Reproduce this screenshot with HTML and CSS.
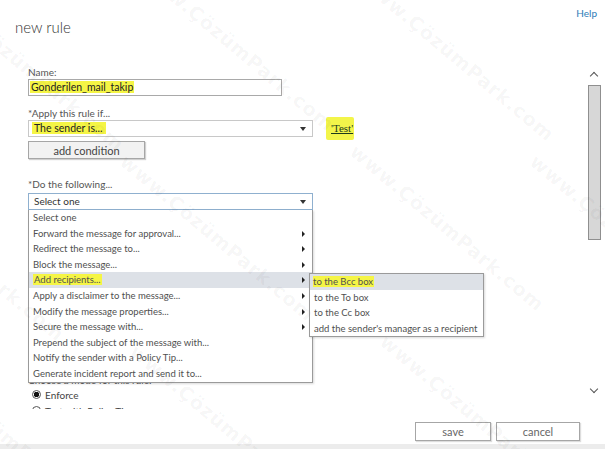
FILE: index.html
```html
<!DOCTYPE html>
<html lang="en">
<head>
    <meta charset="UTF-8">
    <title>new rule</title>
    <link rel="stylesheet" href="styles.css">
</head>
<body>
    <div class="page">
        <div class="top">
            <h1 class="title">new rule</h1>
            <a class="help" href="#">Help</a>
        </div>

        <div class="main">
            <div class="form">
                <label class="label first">Name:</label>
                <div class="input name-input"><span class="mark">Gonderilen_mail_takip</span></div>

                <label class="label">*Apply this rule if...</label>
                <div class="row">
                    <div class="select"><span class="mark">The sender is...</span><span class="caret"></span></div>
                    <span class="test-link"><a href="#">'Test'</a></span>
                </div>
                <button class="btn add-btn" type="button">add condition</button>

                <label class="label gap">*Do the following...</label>
                <div class="select open"><span>Select one</span><span class="caret"></span></div>

                <div class="below">
                    <div class="mode-label">Choose a mode for this rule:</div>
                    <div class="radio"><span class="dot checked"></span>Enforce</div>
                    <div class="radio next"><span class="dot"></span>Test with Policy Tips</div>
                </div>

                <!-- open dropdown of actions -->
                <ul class="menu">
                    <li>Select one</li>
                    <li class="sub">Forward the message for approval...</li>
                    <li class="sub">Redirect the message to...</li>
                    <li class="sub">Block the message...</li>
                    <li class="sub hover"><span class="mark">Add recipients...</span></li>
                    <li class="sub">Apply a disclaimer to the message...</li>
                    <li class="sub">Modify the message properties...</li>
                    <li class="sub">Secure the message with...</li>
                    <li>Prepend the subject of the message with...</li>
                    <li>Notify the sender with a Policy Tip...</li>
                    <li>Generate incident report and send it to...</li>
                </ul>

                <ul class="menu submenu">
                    <li class="hover"><span class="mark">to the Bcc box</span></li>
                    <li>to the To box</li>
                    <li>to the Cc box</li>
                    <li>add the sender's manager as a recipient</li>
                </ul>
            </div>

            <div class="scrollbar">
                <span class="arrow up"></span>
                <div class="thumb"></div>
                <span class="arrow down"></span>
            </div>
        </div>

        <div class="footer">
            <button class="btn save" type="button">save</button>
            <button class="btn cancel" type="button">cancel</button>
        </div>
        <div class="strip"></div>

        <div class="watermark">
            <span style="left:-60px;top:-20px">www.ÇözümPark.com</span>
            <span style="left:150px;top:-40px">www.ÇözümPark.com</span>
            <span style="left:370px;top:-30px">www.ÇözümPark.com</span>
            <span style="left:-120px;top:170px">www.ÇözümPark.com</span>
            <span style="left:130px;top:150px">www.ÇözümPark.com</span>
            <span style="left:360px;top:140px">www.ÇözümPark.com</span>
            <span style="left:540px;top:150px">www.ÇözümPark.com</span>
            <span style="left:-80px;top:350px">www.ÇözümPark.com</span>
            <span style="left:140px;top:340px">www.ÇözümPark.com</span>
            <span style="left:390px;top:330px">www.ÇözümPark.com</span>
        </div>
    </div>
</body>
</html>
```

FILE: styles.css
```css
body {
    margin: 0;
    background-color: #fff;
    color: #444;
    font-family: Lato, "Noto Sans", sans-serif;
    font-size: 10.5px;
}

.page {
    position: relative;
    width: 605px;
    height: 449px;
    overflow: hidden;
}

.top {
    display: flex;
    justify-content: space-between;
    align-items: flex-start;
    padding: 7px 8px 0 15px;
    height: 44px;
}

.title {
    margin: 11px 0 0 0;
    font-size: 15px;
    font-weight: 300;
    color: #333;
}

.help {
    font-size: 10px;
    color: #2d7db8;
    text-decoration: none;
}

.main {
    display: flex;
    justify-content: space-between;
    height: 358px;
    overflow: hidden;
}

.form {
    position: relative;
    padding-left: 28px;
    width: 400px;
}

.label {
    display: block;
    height: 14px;
    line-height: 14px;
    margin-top: 10px;
    font-size: 10px;
    color: #555;
}

.label.first {
    margin-top: 14px;
}

.label.gap {
    margin-top: 18px;
    margin-bottom: 2px;
}

.input,
.select {
    box-sizing: border-box;
    height: 17px;
    line-height: 15px;
    border: 1px solid #a9a9a9;
    padding-left: 1px;
    color: #222;
}

.name-input {
    width: 254px;
}

.mark {
    background-color: #f5f545;
    padding: 0 1px;
}

.row {
    display: flex;
    align-items: center;
    height: 17px;
}

.select {
    position: relative;
    width: 285px;
    border-color: #c8c8c8;
    padding-left: 3px;
}

.select .mark {
    padding: 0 4px 0 2px;
}

.select.open {
    border-color: #8fb0cf;
    padding-left: 5px;
    font-size: 10px;
    color: #333;
}

.caret {
    position: absolute;
    right: 6px;
    top: 6px;
    border-left: 3px solid transparent;
    border-right: 3px solid transparent;
    border-top: 4px solid #333;
}

.test-link {
    margin-left: 13px;
    padding: 5px 1px 6px 5px;
    background-color: #f3f54a;
    border-radius: 2px;
    font-family: "Liberation Serif", serif;
    font-size: 11px;
}

.test-link a {
    color: #1c3a1c;
}

.btn {
    box-sizing: border-box;
    background-color: #f2f2f2;
    border: 1px solid #a6a6a6;
    font-family: inherit;
    font-size: 11px;
    color: #444;
    padding: 0;
}

.add-btn {
    display: block;
    margin-top: 4px;
    width: 117px;
    height: 18px;
    box-shadow: 1px 1px 1px #d0d0d0;
}

.below {
    margin-top: 163px;
    font-size: 10px;
}

.mode-label {
    height: 14px;
    line-height: 14px;
    color: #555;
}

.radio {
    display: flex;
    align-items: center;
    height: 13px;
    margin-top: 1px;
    padding-left: 4px;
    color: #444;
}

.radio.next {
    margin-top: 3px;
}

.dot {
    box-sizing: border-box;
    width: 9px;
    height: 9px;
    margin-right: 4px;
    border: 1px solid #555;
    border-radius: 50%;
    background-color: #fff;
}

.dot.checked {
    background: radial-gradient(circle, #111 0 2.5px, #fff 3px);
}

.menu {
    position: absolute;
    left: 28px;
    top: 159px;
    box-sizing: border-box;
    width: 285px;
    margin: 0;
    padding: 0;
    list-style: none;
    background-color: #fff;
    border: 1px solid #9a9a9a;
    border-top: none;
    box-shadow: 1px 1px 2px rgba(0, 0, 0, 0.15);
    font-size: 9.5px;
}

.menu li {
    position: relative;
    height: 15.6px;
    line-height: 15.6px;
    padding-left: 4px;
    color: #505050;
    white-space: nowrap;
}

.menu li.hover {
    background-color: #dde1e7;
}

.menu li.sub::after {
    content: "";
    position: absolute;
    right: 7px;
    top: 5px;
    border-top: 3px solid transparent;
    border-bottom: 3px solid transparent;
    border-left: 3px solid #222;
}

.submenu {
    left: 309px;
    top: 222px;
    width: 175px;
    border-top: 1px solid #9a9a9a;
}

.submenu li {
    height: 15.5px;
    line-height: 15.5px;
}

.submenu .mark {
    padding: 0 1px 0 0;
    margin-left: -1px;
}

.scrollbar {
    display: flex;
    flex-direction: column;
    align-items: center;
    width: 14px;
    margin-right: 4px;
    padding-top: 22px;
}

.thumb {
    box-sizing: border-box;
    width: 13px;
    height: 155px;
    margin-top: 6px;
    background-color: #d7d7d7;
    border: 1px solid #8f8f8f;
}

.arrow {
    width: 5px;
    height: 5px;
    border-left: 1.5px solid #555;
    border-top: 1.5px solid #555;
    transform: rotate(45deg);
}

.arrow.down {
    margin-top: 146px;
    transform: rotate(225deg);
}

.footer {
    display: flex;
    justify-content: flex-end;
    gap: 5px;
    padding: 13px 25px 0 0;
    height: 22px;
}

.footer .btn {
    height: 19px;
    background-color: #fff;
    color: #666;
    box-shadow: 1px 1px 1px #ddd;
}

.save {
    width: 76px;
}

.cancel {
    width: 84px;
}

.strip {
    height: 5px;
    background-color: #ececec;
}

.watermark {
    position: absolute;
    inset: 0;
    pointer-events: none;
}

.watermark span {
    position: absolute;
    transform: rotate(40deg);
    transform-origin: left top;
    font-family: "DejaVu Sans", sans-serif;
    font-size: 19px;
    font-weight: bold;
    letter-spacing: 1px;
    color: rgba(0, 0, 0, 0.045);
    white-space: nowrap;
}
```
